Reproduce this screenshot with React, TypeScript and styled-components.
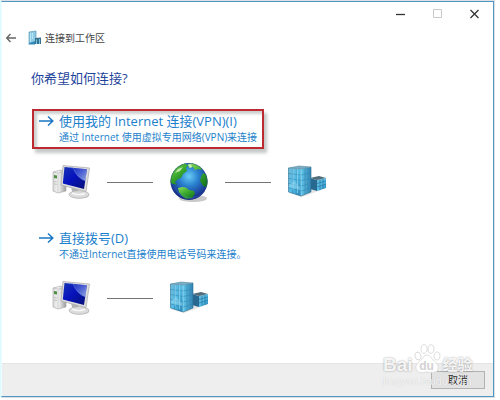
import React from "react";
import styled, { createGlobalStyle } from "styled-components";

const GlobalStyle = createGlobalStyle`
  * { box-sizing: border-box; }
  html, body { margin: 0; background: #fff; }
  body, button {
    font-family: "Open Sans", "Noto Sans CJK SC", sans-serif;
  }
`;

const Screen = styled.main`
  display: flex;
  height: 100vh;
  min-height: 340px;
  padding: 0 5px 2px 0;
`;

const Backdrop = styled.div`
  display: flex;
  flex: 1;
  padding: 1px 1px 1px 0;
  background: #dcdfe1;
  border-left: 1px solid #e0fbff;
`;

const Dialog = styled.section`
  position: relative;
  display: flex;
  flex: 1;
  flex-direction: column;
  background: #fff;
  border: 1px solid #4f97c4;
  border-left-color: #e9fcff;
`;

const CaptionBar = styled.div`
  display: flex;
  justify-content: flex-end;
  height: 22px;
`;

const CaptionButton = styled.button`
  display: grid;
  place-items: center;
  width: 37px;
  height: 22px;
  padding: 0;
  border: 0;
  background: transparent;
  color: #333;

  &:disabled { color: #c9c9c9; }
`;

const TitleRow = styled.header`
  display: flex;
  align-items: center;
  height: 28px;
`;

const BackButton = styled.button`
  display: grid;
  place-items: center;
  width: 18px;
  height: 18px;
  margin-right: 7px;
  padding: 0;
  border: 0;
  background: transparent;
`;

const WindowTitle = styled.span`
  margin-left: 2px;
  color: #444;
  font-size: 10px;
  line-height: 16px;
`;

const Content = styled.div`
  flex: 1;
  padding: 16px 28px 0 30px;
`;

const Heading = styled.h1`
  margin: 0;
  margin-left: -1px;
  color: #1f459c;
  font-size: 13px;
  font-weight: 400;
  line-height: 20px;
`;

const Options = styled.div`
  display: flex;
  flex-direction: column;
  align-items: flex-start;
  margin-top: 21px;
`;

const Option = styled.button<{ $marked?: boolean }>`
  display: grid;
  grid-template-columns: 20px auto;
  align-content: start;
  align-items: center;
  height: 40px;
  padding: 1px 5px 0;
  border: 2px solid ${(p) => (p.$marked ? "#bd2b30" : "transparent")};
  background: transparent;
  box-shadow: ${(p) =>
    p.$marked
      ? "3px 4px 3px rgba(90, 100, 100, 0.35), inset 3px 3px 3px rgba(90, 100, 100, 0.3)"
      : "none"};
  color: #1c7fcc;
  text-align: left;
  white-space: nowrap;
`;

const OptionTitle = styled.span`
  font-size: 13px;
  line-height: 18px;
`;

const OptionNote = styled.span`
  grid-column: 2;
  font-size: 10px;
  line-height: 14px;
`;

const Route = styled.div<{ $last?: boolean }>`
  display: flex;
  align-items: center;
  gap: 16px;
  height: 44px;
  margin: ${(p) => (p.$last ? "10px 0 0 19px" : "11px 0 22px 19px")};
`;

const Link = styled.span`
  width: 46px;
  height: 1px;
  background: #737373;
`;

const Footer = styled.footer`
  display: flex;
  justify-content: flex-end;
  align-items: flex-start;
  height: 33px;
  padding: 7px 8px 0;
  border-top: 1px solid #e5e5e5;
  background: #eee;
`;

const CancelButton = styled.button`
  width: 54px;
  height: 18px;
  padding: 0;
  border: 1px solid #b2b2b2;
  background: #e2e2e2;
  color: #222;
  font-size: 10px;
  line-height: 14px;
`;

const Watermark = styled.div`
  position: absolute;
  right: 16px;
  bottom: 8px;
  width: 94px;
  color: rgba(255, 255, 255, 0.9);
  font-family: "Liberation Sans", "Noto Sans CJK SC", sans-serif;
  text-shadow: 0 0 2px rgba(110, 110, 110, 0.7);
  pointer-events: none;
`;

const Brand = styled.div`
  display: flex;
  align-items: flex-end;
  height: 32px;
  font-size: 19px;
  font-weight: 700;
  line-height: 20px;
`;

const BrandCn = styled.span`
  margin-left: 2px;
  font-size: 15px;
`;

const Paw = styled.span`
  position: relative;
  width: 28px;
  height: 32px;
`;

const PawText = styled.span`
  position: absolute;
  right: 0;
  bottom: 2px;
  left: 0;
  color: #d3d3d3;
  font-size: 12px;
  line-height: 14px;
  text-align: center;
  text-shadow: none;
`;

const Site = styled.div`
  color: rgba(255, 255, 255, 0.8);
  font-size: 11px;
  line-height: 13px;
  text-shadow: 0 0 1px rgba(130, 130, 130, 0.4);
`;

function ArrowIcon() {
  return (
    <svg width="15" height="12" viewBox="0 0 15 12" fill="none" stroke="#1977c4" strokeWidth="1.5" aria-hidden="true">
      <path d="M0 6h13.5M9 1.5 13.8 6 9 10.5" />
    </svg>
  );
}

function ComputerIcon() {
  return (
    <svg width="40" height="36" viewBox="0 0 40 36" aria-hidden="true">
      <defs>
        <linearGradient id="screen" x1="0" y1="0" x2="1" y2="1">
          <stop offset="0" stopColor="#1834b4" />
          <stop offset="0.45" stopColor="#0712bd" />
          <stop offset="1" stopColor="#071173" />
        </linearGradient>
        <linearGradient id="glare" x1="0" y1="0" x2="1" y2="1">
          <stop offset="0" stopColor="#8aaef0" stopOpacity="0.15" />
          <stop offset="1" stopColor="#bcd3ff" stopOpacity="0.8" />
        </linearGradient>
        <linearGradient id="tower" x1="0" x2="1">
          <stop offset="0" stopColor="#d9d9d9" />
          <stop offset="0.4" stopColor="#f6f6f6" />
          <stop offset="1" stopColor="#9d9d9d" />
        </linearGradient>
      </defs>
      <ellipse cx="29" cy="32" rx="9" ry="2.5" fill="#999" opacity="0.35" />
      <path d="M2 8 10 6l5 3v18L7 29l-5-2z" fill="url(#tower)" stroke="#a4a4a4" strokeWidth="0.6" />
      <path d="m2 8 5 1v20M7 9l8-1" fill="none" stroke="#bcbcbc" strokeWidth="0.7" />
      <path d="m3 11 3 .4v3L3 14z" fill="#4f8f42" />
      <path d="M3 17.5 6 18M3 20l3 .5" stroke="#b5b5b5" strokeWidth="0.7" />
      <path d="m20 23 7 2 1 6h-6z" fill="#b4b4b4" />
      <ellipse cx="28" cy="30.5" rx="10" ry="3.8" fill="#dcdcdc" stroke="#a6a6a6" strokeWidth="0.6" />
      <path d="M21 29c4 2 9 2 13 .5" stroke="#f8f8f8" strokeWidth="1.4" fill="none" />
      <path d="M12 1.5 38.5 4 35 27.5 10 21z" fill="#dedede" stroke="#a7a7a7" strokeWidth="0.7" />
      <path d="M13.5 3 36 5.2 33 25 11.8 19.5z" fill="url(#screen)" />
      <path d="m22 3.9 14 1.3-1.6 11.7Q26 14 22 3.9z" fill="url(#glare)" />
      <path d="M17 3.4 22 3.9Q26 14 34.4 16.9" fill="none" stroke="#6889e2" strokeWidth="0.5" />
    </svg>
  );
}

function GlobeIcon() {
  return (
    <svg width="40" height="42" viewBox="0 0 40 42" aria-hidden="true">
      <defs>
        <radialGradient id="ocean" cx="0.5" cy="0.36" r="0.62">
          <stop offset="0" stopColor="#68cdf5" />
          <stop offset="0.42" stopColor="#2a80cf" />
          <stop offset="1" stopColor="#162783" />
        </radialGradient>
        <linearGradient id="land" x1="0" y1="0" x2="0.7" y2="1">
          <stop offset="0" stopColor="#8fdc5c" />
          <stop offset="0.5" stopColor="#3fae30" />
          <stop offset="1" stopColor="#16761f" />
        </linearGradient>
        <clipPath id="globeEdge"><circle cx="20" cy="20.5" r="18.5" /></clipPath>
      </defs>
      <ellipse cx="24" cy="37.5" rx="14" ry="3.5" fill="#777" opacity="0.4" />
      <circle cx="20" cy="20.5" r="18.5" fill="url(#ocean)" />
      <g clipPath="url(#globeEdge)">
        <path d="M1 22C1 10 7 4 15 2l4 2-2 3 1 3-4 3-2 4-3 1-3 3 2 3-3-1z" fill="url(#land)" />
        <path d="m19 3 5-1 8 4 1 3-4-1-3 1-2-3-4 1zM34 12l4 2 2 8-2 4-4-1-3-5 1-4z" fill="url(#land)" />
        <path d="m9 27 4-1 4 .5 3 2.5 5 1 1 3-3 4-6 1-4-3-3-4z" fill="url(#land)" />
        <path d="m19 4 3-1 1 3-2 1zM6 12l3-4 5-2-3 4z" fill="#d9f5c7" opacity="0.8" />
        <path d="M5 25c5 15 23 18 31 4-6 9-23 10-31-4z" fill="#76b9ff" opacity="0.15" />
      </g>
      <circle cx="20" cy="20.5" r="18" fill="none" stroke="#243b88" strokeOpacity="0.35" />
    </svg>
  );
}

function ServerIcon() {
  return (
    <svg width="40" height="34" viewBox="0 0 40 34" aria-hidden="true">
      <defs>
        <linearGradient id="front" x1="0" y1="0" x2="1" y2="1">
          <stop offset="0" stopColor="#6eb9d8" />
          <stop offset="0.5" stopColor="#56bce5" />
          <stop offset="1" stopColor="#2685b7" />
        </linearGradient>
        <linearGradient id="side" x1="0" x2="1">
          <stop offset="0" stopColor="#62c5e8" />
          <stop offset="1" stopColor="#3484b2" />
        </linearGradient>
      </defs>
      <path d="m2 28 13 4 22-8 2-2-13-1z" fill="#999" opacity="0.25" />
      <path d="m23 13 7 2v11l-7-2z" fill="#276991" />
      <path d="m30 15 9-2v10l-9 3z" fill="url(#front)" />
      <path d="m23 13 9-2 7 2-9 2z" fill="#526c7a" />
      <path d="M30 18.5 39 16M30 22l9-3M33 14.5V25M36 14v10" stroke="#2377a5" strokeWidth="0.7" />
      <path d="M1.5 3 14 4v27L1.5 27z" fill="url(#front)" />
      <path d="m14 4 10-2v25l-10 4z" fill="url(#side)" />
      <path d="M1.5 3 12 1l12 1-10 2z" fill="#79aec5" stroke="#497b93" strokeWidth="0.5" />
      <path d="M1.5 8.5 14 10l10-2M1.5 13.5 14 15.5l10-2M1.5 18.5 14 21l10-2.5M1.5 23 14 26l10-3M5.5 4v24M10 4v26M18 3.5v26M21 3V28" fill="none" stroke="#2f8ab7" strokeWidth="0.6" />
      <path d="M14 4v27M6 4v21M10.5 4v24" stroke="#a3e4f8" strokeWidth="0.6" />
      <path d="m2 20 5-4 6 6v3L2 22z" fill="#96daf1" opacity="0.5" />
      <path d="M1.5 3v24L14 31l10-4V2" fill="none" stroke="#286d91" strokeWidth="0.6" />
    </svg>
  );
}

function WorkplaceIcon() {
  return (
    <svg width="16" height="16" viewBox="0 0 16 16" aria-hidden="true">
      <path d="M2 2 9 1v12H2z" fill="#8ccbe3" stroke="#5a9ab5" strokeWidth="0.7" />
      <path d="M3.5 3v9M5.5 3v6" stroke="#b9e5f2" />
      <path d="m8 8 6-.5V14H8z" fill="#36728f" />
      <path d="M9.5 9.5V14m3-5v5" stroke="#78c5df" />
      <path d="M1.5 13.5 8 11v3.5H1.5z" fill="#3389b8" />
    </svg>
  );
}

function PawIcon() {
  return (
    <svg width="28" height="32" viewBox="0 0 28 32" fill="#fff" fillOpacity="0.85" stroke="#d5d5d5" strokeWidth="0.8" aria-hidden="true">
      <ellipse cx="5" cy="13" rx="3" ry="4" transform="rotate(-15 5 13)" />
      <ellipse cx="11" cy="6" rx="3" ry="4.3" />
      <ellipse cx="18" cy="6" rx="3" ry="4.3" transform="rotate(8 18 6)" />
      <ellipse cx="24" cy="13" rx="3" ry="4" transform="rotate(10 24 13)" />
      <path d="M14 12c3 0 4 3 6 5 4 3 6 5 5 9-1 5-7 4-11 3-4 1-9 2-11-3-1-4 2-6 5-9 2-2 3-5 6-5z" />
    </svg>
  );
}

export default function App() {
  return (
    <>
      <GlobalStyle />
      <Screen>
        <Backdrop>
          <Dialog role="dialog" aria-labelledby="window-title">
            <CaptionBar>
              <CaptionButton aria-label="最小化">
                <svg width="11" height="11" viewBox="0 0 11 11" stroke="currentColor"><path d="M1 6.5h9" strokeWidth="1.3" /></svg>
              </CaptionButton>
              <CaptionButton aria-label="最大化" disabled>
                <svg width="11" height="11" viewBox="0 0 11 11" fill="none" stroke="currentColor"><path d="M1.5 1.5h8v8h-8z" /></svg>
              </CaptionButton>
              <CaptionButton aria-label="关闭">
                <svg width="11" height="11" viewBox="0 0 11 11" stroke="currentColor" strokeWidth="1.3"><path d="m1.5 2 8 8m0-8-8 8" /></svg>
              </CaptionButton>
            </CaptionBar>
            <TitleRow>
              <BackButton aria-label="返回">
                <svg width="12" height="10" viewBox="0 0 12 10" fill="none" stroke="#666" strokeWidth="1.4"><path d="M11 5H2M5.5 1 1.7 5l3.8 4" /></svg>
              </BackButton>
              <WorkplaceIcon />
              <WindowTitle id="window-title">连接到工作区</WindowTitle>
            </TitleRow>
            <Content>
              <Heading>你希望如何连接?</Heading>
              <Options>
                <Option $marked>
                  <ArrowIcon />
                  <OptionTitle>使用我的 Internet 连接(VPN)(I)</OptionTitle>
                  <OptionNote>通过 Internet 使用虚拟专用网络(VPN)来连接</OptionNote>
                </Option>
                <Route>
                  <ComputerIcon /><Link /><GlobeIcon /><Link /><ServerIcon />
                </Route>
                <Option>
                  <ArrowIcon />
                  <OptionTitle>直接拨号(D)</OptionTitle>
                  <OptionNote>不通过Internet直接使用电话号码来连接。</OptionNote>
                </Option>
                <Route $last>
                  <ComputerIcon /><Link /><ServerIcon />
                </Route>
              </Options>
            </Content>
            <Footer>
              <CancelButton>取消</CancelButton>
            </Footer>
            <Watermark>
              <Brand>
                <span>Bai</span>
                <Paw><PawIcon /><PawText>du</PawText></Paw>
                <BrandCn>经验</BrandCn>
              </Brand>
              <Site>jingyan.baidu.com</Site>
            </Watermark>
          </Dialog>
        </Backdrop>
      </Screen>
    </>
  );
}
